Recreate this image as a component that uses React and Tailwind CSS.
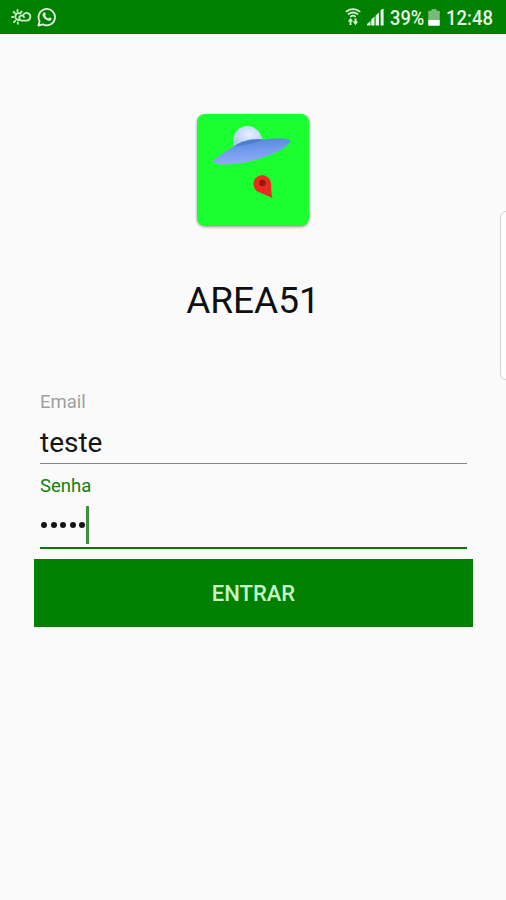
function WeatherIcon() {
  return (
    <svg width="21" height="18" viewBox="0 0 21 18" fill="none" stroke="#c9ebc9" strokeWidth="1.8" strokeLinecap="round">
      <path d="M9.6 5.600A3.500 3.500 0 1 0 8.600 12" />
      <path d="M6.500 2v1.400M2.600 3.800l1.200 1.200M1 9h1.400M3 14l1.200-1.200M6.800 14.400v1.400M10.600 3.400l-.6.900" />
      <path d="M10.800 12.600h4.800a3.800 3.800 0 1 0-3.400-5.600M10.800 12.600a2.500 2.500 0 1 1 2.300-3.400" />
    </svg>
  );
}

function WhatsappIcon() {
  return (
    <svg width="20" height="20" viewBox="0 0 20 20">
      <path
        d="M1.400 18.600l1.200-4.500a8.200 8.200 0 1 1 3.200 3.200z"
        fill="none"
        stroke="#dff5df"
        strokeWidth="1.8"
        strokeLinejoin="round"
      />
      <path
        d="M7.100 5.300c.4-.2.8-.1 1 .3l.7 1.600c.1.3 0 .6-.6 1.300.7 1.400 1.700 2.300 3.100 2.900.7-.8.9-1.100 1.200-1l1.800.9c.4.2.3 1-.1 1.600-.8 1-2.100 1.200-3.600.6-2.500-1-4.400-3-5-5-.3-1.300.4-2.700 1.500-3.200z"
        fill="#dff5df"
      />
    </svg>
  );
}

function WifiIcon() {
  return (
    <svg width="16" height="18" viewBox="0 0 16 18" fill="none" stroke="#d5f0d5" strokeWidth="1.8" strokeLinecap="round">
      <path d="M1.400 3.400q6.600-4.400 13.200 0M3.600 6q4.400-3 8.800 0M5.800 8.400q2.200-1.500 4.400 0" />
      <path d="M2.800 13.600l2.700-3.800 2.700 3.800zM7.800 13.600l2.700 3.600 2.700-3.600z" fill="#d5f0d5" stroke="none" />
      <path d="M5.500 12.500v4.500M10.500 10.400v4" strokeWidth="2" strokeLinecap="butt" />
    </svg>
  );
}

function SignalIcon() {
  return (
    <svg width="19" height="18" viewBox="0 0 19 18" fill="#e4f6e4">
      <path d="M1 16l3.500-3v4.500H1z" />
      <path d="M5.200 11.500l3.300-3v9H5.200z" />
      <path d="M9.600 7.500l3.400-3v13H9.600z" />
      <path d="M14.600 2l3-1.500v17h-3z" />
    </svg>
  );
}

function BatteryIcon() {
  return (
    <svg width="12" height="17" viewBox="0 0 12 17">
      <path d="M3.500 0h5v1.800H11q.8 0 .8.800V11H.2V2.600q0-.8.800-.8h2.500z" fill="#78b878" />
      <path d="M.2 11h11.600v5q0 .8-.8.800H1q-.8 0-.8-.8z" fill="#fff" />
    </svg>
  );
}

function StatusBar() {
  return (
    <header className="flex h-[34px] items-center bg-[#008000] pl-[11px] text-[21px] leading-none text-[#e8f8e8]">
      <WeatherIcon />
      <span className="ml-[5px]">
        <WhatsappIcon />
      </span>
      <div className="ml-auto flex w-[161px] items-center">
        <WifiIcon />
        <span className="ml-[5px]">
          <SignalIcon />
        </span>
        <span className="mt-[2px] ml-[5px] w-[37px] origin-left scale-x-[0.87] font-medium">39%</span>
        <span className="mt-[1px] ml-[1px]">
          <BatteryIcon />
        </span>
        <span className="mt-[2px] ml-[6px] origin-left scale-x-[0.88] font-medium">12:48</span>
      </div>
    </header>
  );
}

function Logo() {
  return (
    <div className="h-[112px] w-[112px] rounded-[8px] bg-[#1aff30] shadow-[0_1px_3px_rgba(0,0,0,0.4)]">
      <svg width="112" height="112" viewBox="0 0 112 112">
        <defs>
          <linearGradient id="saucer" x1="0" y1="0" x2="0.2" y2="1">
            <stop offset="0" stopColor="#4f82d4" />
            <stop offset="0.5" stopColor="#7099ee" />
            <stop offset="1" stopColor="#8faef5" />
          </linearGradient>
          <radialGradient id="dome" cx="0.55" cy="0.4" r="0.6">
            <stop offset="0" stopColor="#e8f0ff" />
            <stop offset="0.65" stopColor="#c5d8fa" />
            <stop offset="1" stopColor="#a4d3e0" />
          </radialGradient>
        </defs>
        <path d="M37 33C34 22 40 12.500 50 12C58 12 63.500 18 65.500 25.500Q50 25 37 33z" fill="url(#dome)" />
        <path d="M15.500 48C18 43.500 28 38.500 36.500 32.500C45 26.500 56 24.500 66 25.500C77 24.500 88 23.500 94 26.500C91 33.500 76 40.500 63 44.500C46 50.500 21 52.500 15.500 48z" fill="url(#saucer)" />
        <path d="M36.500 32.500Q48 23.500 66 25.500Q58 30.500 36.500 32.500z" fill="#3f70be" opacity="0.5" />
        <path d="M75.500 84L59.500 77C55.500 73 55.500 66 60 63C64.500 60 71 61 73.500 67C74.800 71 73.500 76 75.500 84z" fill="#e82c20" />
        <circle cx="65.500" cy="69" r="3.200" fill="#951710" />
      </svg>
    </div>
  );
}

export default function App() {
  return (
    <div className="relative h-[900px] w-full overflow-hidden bg-[#fafafa] font-['Roboto',sans-serif]">
      <StatusBar />

      <main className="flex flex-col px-[34px] pt-[80px]">
        <div className="flex justify-center">
          <Logo />
        </div>
        <h1 className="mt-[53px] text-center text-[37px] leading-[44px] text-[#101010]">AREA51</h1>

        <form className="mt-[67px] flex flex-col">
          <div className="ml-[6px] h-[74px] w-[427px] border-b border-[#858585]">
            <label className="block text-[18.5px] leading-[24px] text-[#a0a0a0]">Email</label>
            <div className="mt-[12px] text-[28px] leading-[34px] text-[#151515]">teste</div>
          </div>
          <div className="ml-[6px] h-[85px] w-[427px] border-b-[2px] border-[#087a08] pt-[10px]">
            <label className="block text-[18.5px] leading-[24px] text-[#108010]">Senha</label>
            <div className="mt-[8px] flex h-[38px] items-center">
              <div className="flex gap-[3.5px] pl-[1px]">
                {[1, 2, 3, 4, 5].map((dot) => (
                  <span key={dot} className="h-[6px] w-[6px] rounded-full bg-[#151515]" />
                ))}
              </div>
              <span className="ml-[1px] h-[38px] w-[3px] bg-[#409040]" />
            </div>
          </div>
          <button
            type="button"
            className="mt-[10px] h-[68px] w-[439px] bg-[#008000] text-[22px] font-medium text-[#c8f5c8]"
          >
            ENTRAR
          </button>
        </form>
      </main>

      {/* edge panel handle */}
      <div className="absolute top-[211px] -right-[6px] h-[169px] w-[12px] rounded-[6px] border border-[#d4d4d4] bg-[#fdfdfd]" />
    </div>
  );
}
